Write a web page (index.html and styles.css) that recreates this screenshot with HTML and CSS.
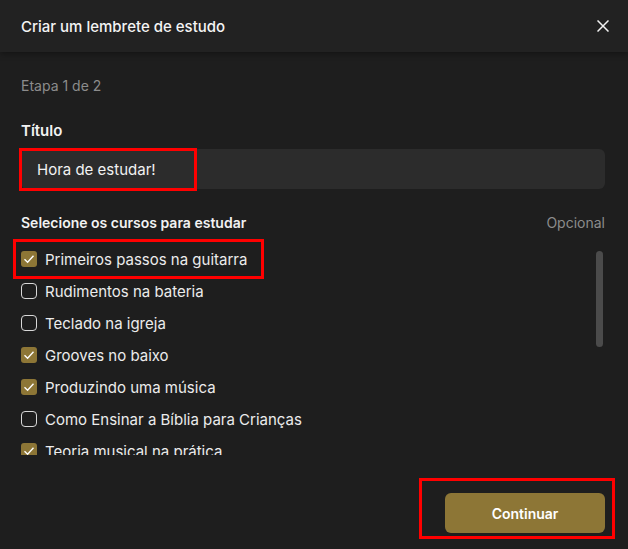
FILE: index.html
```html
<html><head>
<meta charset="UTF-8">
<title>Criar um lembrete de estudo</title>
<link rel="stylesheet" href="styles.css">
</head>
<body>
    <div class="modal">
        <div class="modal-header">
            <h2>Criar um lembrete de estudo</h2>
            <button class="close-btn" aria-label="Fechar">
                <svg viewBox="0 0 12 12" width="12" height="12">
                    <path d="M0.5 0.5 L11.5 11.5 M11.5 0.5 L0.5 11.5" stroke="#f2f2f2" stroke-width="1.5" fill="none"/>
                </svg>
            </button>
        </div>

        <div class="modal-body">
            <div class="step">Etapa 1 de 2</div>

            <label class="field-label" for="title-input">Título</label>
            <div class="input-wrap">
                <input type="text" id="title-input" value="Hora de estudar!">
                <span class="mark mark-input"></span>
            </div>

            <div class="section-head">
                <span class="section-title">Selecione os cursos para estudar</span>
                <span class="optional">Opcional</span>
            </div>

            <div class="course-scroll">
                <ul class="course-list">
                    <li class="course checked">
                        <span class="box"></span>Primeiros passos na guitarra
                        <span class="mark mark-course"></span>
                    </li>
                    <li class="course"><span class="box"></span>Rudimentos na bateria</li>
                    <li class="course"><span class="box"></span>Teclado na igreja</li>
                    <li class="course checked"><span class="box"></span>Grooves no baixo</li>
                    <li class="course checked"><span class="box"></span>Produzindo uma música</li>
                    <li class="course"><span class="box"></span>Como Ensinar a Bíblia para Crianças</li>
                    <li class="course checked"><span class="box"></span>Teoria musical na prática</li>
                </ul>
                <div class="scroll-track"><div class="scroll-thumb"></div></div>
            </div>
        </div>

        <div class="modal-footer">
            <button class="continue-btn">
                Continuar
                <span class="mark mark-button"></span>
            </button>
        </div>
    </div>
</body></html>
```

FILE: styles.css
```css
* {
    margin: 0;
    padding: 0;
    box-sizing: border-box;
    font-family: 'Inter', 'Noto Sans', sans-serif;
}

body {
    background: #1e1e1e;
    color: #f2f2f2;
    width: 628px;
    height: 549px;
    overflow: hidden;
}

.modal {
    height: 549px;
    display: flex;
    flex-direction: column;
}

.modal-header {
    height: 52px;
    display: flex;
    align-items: center;
    justify-content: space-between;
    padding: 0 21px;
    background: #222222;
    box-shadow: 0 2px 6px rgba(0, 0, 0, 0.35);
    position: relative;
    z-index: 1;
}

.modal-header h2 {
    font-size: 15px;
    font-weight: 500;
    color: #f4f4f4;
    margin-top: 1px;
}

.close-btn {
    background: none;
    border: none;
    display: flex;
    margin-right: -2px;
    cursor: pointer;
}

.modal-body {
    padding: 24px 23px 0 21px;
}

.step {
    font-size: 14px;
    line-height: 20px;
    color: #8c8c8c;
}

.field-label {
    display: block;
    margin-top: 25px;
    font-size: 15px;
    font-weight: 600;
    line-height: 20px;
}

.input-wrap {
    position: relative;
    margin-top: 8px;
}

input {
    width: 100%;
    height: 40px;
    padding: 0 16px;
    border: none;
    border-radius: 6px;
    background: #2c2c2c;
    color: #f2f2f2;
    font-size: 15px;
    outline: none;
}

.section-head {
    display: flex;
    justify-content: space-between;
    margin-top: 24px;
    font-size: 14px;
    line-height: 20px;
}

.section-title {
    font-weight: 600;
}

.optional {
    color: #8c8c8c;
}

/* padding extra para a marcação não ser cortada */
.course-scroll {
    display: flex;
    height: 216px;
    margin: 6px 0 0 -10px;
    padding: 4px 0 0 10px;
    overflow: hidden;
}

.course-list {
    flex: 1;
    list-style: none;
}

.course {
    position: relative;
    display: flex;
    align-items: center;
    gap: 8px;
    height: 32px;
    font-size: 15px;
    color: #ececec;
}

.box {
    width: 16px;
    height: 16px;
    border: 1.5px solid #d8d8d8;
    border-radius: 4px;
    flex-shrink: 0;
}

.checked .box {
    border: none;
    border-radius: 3px;
    background: #8d7636 url("data:image/svg+xml;utf8,<svg xmlns='http://www.w3.org/2000/svg' viewBox='0 0 16 16'><path d='M3.5 8.2 L6.6 11.2 L12.5 4.8' stroke='white' stroke-width='1.4' fill='none'/></svg>") center / 16px no-repeat;
}

.scroll-track {
    width: 7px;
    margin-right: 2px;
    padding-top: 8px;
}

.scroll-thumb {
    height: 96px;
    border-radius: 4px;
    background: #4b4b4b;
}

.modal-footer {
    display: flex;
    justify-content: flex-end;
    padding: 38px 23px 0 21px;
}

.continue-btn {
    position: relative;
    width: 160px;
    height: 40px;
    border: none;
    border-radius: 6px;
    background: #8d7636;
    color: #ffffff;
    font-size: 14px;
    font-weight: 600;
    cursor: pointer;
}

/* marcações vermelhas de destaque */
.mark {
    position: absolute;
    border: 3px solid #ff0000;
    pointer-events: none;
}

.mark-input {
    left: -2px;
    top: -1px;
    width: 178px;
    height: 43px;
}

.mark-course {
    left: -8px;
    top: -4px;
    width: 251px;
    height: 40px;
}

.mark-button {
    left: -26px;
    top: -15px;
    width: 196px;
    height: 61px;
}
```
